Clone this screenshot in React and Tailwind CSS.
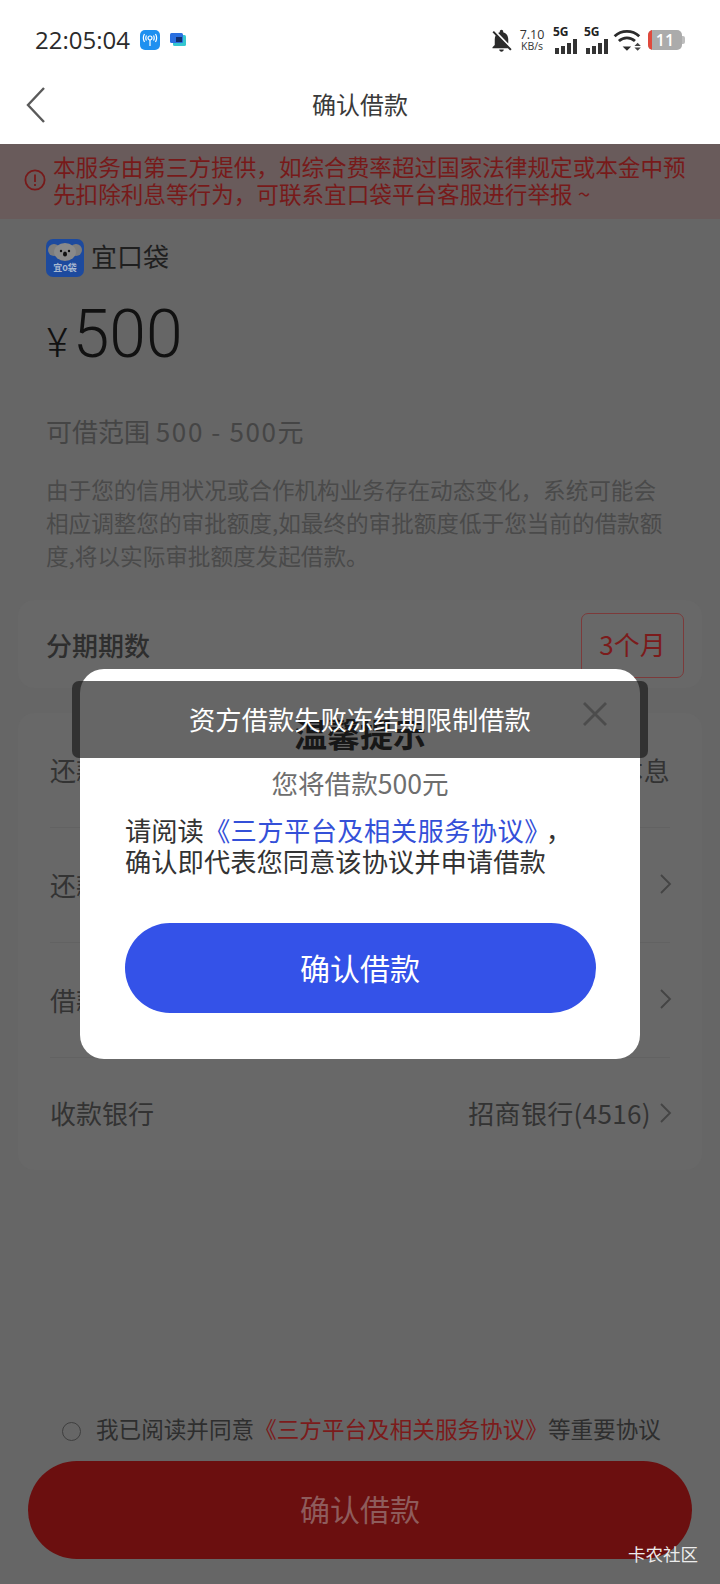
import React from "react"
import { MdNotificationsOff } from "react-icons/md"

const cjk = { fontFamily: '"Noto Sans CJK SC", sans-serif' }

function Signal() {
  return (
    <div className="flex flex-col items-start w-[25px]">
      <span className="text-[12px] leading-[12px] font-bold text-[#222] font-['Open_Sans',sans-serif]">5G</span>
      <svg width="25" height="15" viewBox="0 0 25 15" className="mt-[1px]">
        <rect x="2" y="9" width="4" height="6" fill="#333" />
        <rect x="8" y="7" width="4" height="8" fill="#333" />
        <rect x="14" y="4" width="4" height="11" fill="#333" />
        <rect x="20" y="0" width="4" height="15" fill="#333" />
      </svg>
    </div>
  )
}

function StatusBar() {
  return (
    <div className="h-[72px] bg-white flex items-center justify-between pl-[35px] pr-[35px] pt-[8px]">
      <div className="flex items-center">
        <span className="text-[24px] leading-none text-[#2b2b2b] font-['Open_Sans',sans-serif] font-medium w-[105px]">22:05:04</span>
        <div className="w-[20px] h-[20px] rounded-[5px] bg-[#1e90f0] flex items-center justify-center">
          <svg width="16" height="14" viewBox="0 0 16 14" fill="none" stroke="white" strokeWidth="1.2">
            <circle cx="8" cy="5" r="2" />
            <path d="M8 7v6M4.5 2.5a5 5 0 0 0 0 5M11.5 2.5a5 5 0 0 1 0 5M2.5 1a8 8 0 0 0 0 8M13.5 1a8 8 0 0 1 0 8" />
          </svg>
        </div>
        <svg width="16" height="15" viewBox="0 0 16 15" className="ml-[10px]">
          <rect x="3" y="2" width="13" height="11" rx="1.5" fill="#35c7d0" />
          <rect x="0" y="0" width="13" height="10" rx="1.5" fill="#2a6fe0" />
          <rect x="6" y="4" width="6" height="5" fill="#12306e" />
        </svg>
      </div>
      <div className="flex items-center">
        <MdNotificationsOff className="w-[27px] h-[27px] text-[#2b2b2b]" />
        <div className="ml-[4px] w-[26px] flex flex-col items-center font-['Open_Sans',sans-serif] text-[#333]">
          <span className="text-[12.5px] leading-[13px] font-medium">7.10</span>
          <span className="text-[10.5px] leading-[11px]">KB/s</span>
        </div>
        <div className="ml-[8px] flex gap-[6px]">
          <Signal />
          <Signal />
        </div>
        <svg width="30" height="24" viewBox="0 0 28 22" fill="none" className="ml-[4px]">
          <path d="M1.5 7.5a17 17 0 0 1 23 0" stroke="#2b2b2b" strokeWidth="2.6" />
          <path d="M5.5 12a11 11 0 0 1 15 0" stroke="#2b2b2b" strokeWidth="2.6" />
          <path d="M9 17h8l-4 4z" fill="#2b2b2b" />
          <path d="M20 16.5h6l-3-3zM20 18h6l-3 3z" fill="#444" />
        </svg>
        <div className="ml-[5px] w-[37px] h-[20px] flex items-center">
          <div className="relative w-[34px] h-[20px] rounded-[5px] bg-[#ababab] overflow-hidden flex items-center justify-center">
            <div className="absolute left-0 top-0 bottom-0 w-[4px] bg-[#e0493c]" />
            <span className="text-[16px] leading-none font-semibold text-white font-['Open_Sans',sans-serif]">11</span>
          </div>
          <div className="w-[3px] h-[8px] bg-[#bdbdbd] rounded-r-[2px]" />
        </div>
      </div>
    </div>
  )
}

function NavBar() {
  return (
    <div className="relative h-[72px] bg-white flex items-center justify-center pb-[8px]">
      <svg width="24" height="38" viewBox="0 0 24 38" fill="none" className="absolute left-[24px] top-[14px]">
        <path d="M20 2 L4 19 L20 36" stroke="#5a5a5a" strokeWidth="2.4" />
      </svg>
      <span className="text-[24px] text-[#3a3a3a]">确认借款</span>
    </div>
  )
}

function Chevron() {
  return (
    <svg width="14" height="22" viewBox="0 0 14 22" fill="none" className="ml-[8px] mr-[-3px]">
      <path d="M2 2 L11 11 L2 20" stroke="#444" strokeWidth="1.8" />
    </svg>
  )
}

function Row({ label, value, arrow, last }) {
  return (
    <div className={"h-[115px] flex items-center justify-between text-[26px] text-[#333] " + (last ? "pb-[6px]" : "pb-[2px] border-b border-[#626262]")}>
      <span>{label}</span>
      <div className="flex items-center">
        <span className="tracking-[0.35px]">{value}</span>
        {arrow && <Chevron />}
      </div>
    </div>
  )
}

function KoalaLogo() {
  return (
    <svg width="38" height="38" viewBox="0 0 38 38" className="shrink-0">
      <rect width="38" height="38" rx="7" fill="#1d4a9e" />
      <circle cx="8" cy="11" r="6" fill="#7d7d7d" />
      <circle cx="30" cy="11" r="6" fill="#7d7d7d" />
      <ellipse cx="19" cy="13" rx="11" ry="9" fill="#8a8a8a" />
      <circle cx="15" cy="12" r="1.2" fill="#111" />
      <circle cx="23" cy="12" r="1.2" fill="#111" />
      <ellipse cx="19" cy="15" rx="2" ry="2.5" fill="#111" />
      <text x="19" y="32" textAnchor="middle" fontSize="9" fontWeight="700" fill="#a8b8d0" fontFamily="Noto Sans CJK SC">宜o袋</text>
    </svg>
  )
}

function Modal() {
  return (
    <>
      <div className="absolute left-[80px] top-[669px] w-[560px] h-[390px] rounded-[24px] bg-white flex flex-col items-center overflow-hidden">
        <div className="mt-[41px] text-[33px] leading-[46px] font-bold text-[#1a1a1a]">温馨提示</div>
        <div className="mt-[8px] text-[26.6px] leading-[38px] text-[#6e6e6e]">您将借款500元</div>
        <div className="mt-[12px] w-[470px] text-[26.3px] leading-[31px] text-[#333]">
          请阅读<span className="text-[#3450d8] tracking-[0.4px]">《三方平台及相关服务协议》</span><span className="ml-[8px]">，</span><br />
          确认即代表您同意该协议并申请借款
        </div>
        <div className="mt-[47px] w-[471px] h-[90px] pb-[2px] rounded-full bg-[#3452e8] flex items-center justify-center text-[30px] text-white">确认借款</div>
      </div>
      <div className="absolute left-[72px] top-[681px] w-[576px] h-[77px] rounded-[7px] bg-[#171717]/[0.66] flex items-center justify-center">
        <span className="text-[26.3px] text-white relative top-[-1px]">资方借款失败冻结期限制借款</span>
        <svg width="26" height="26" viewBox="0 0 26 26" fill="none" className="absolute right-[40px] top-[20px]">
          <path d="M2 2 L24 24 M24 2 L2 24" stroke="#4c4c4c" strokeWidth="2.8" />
        </svg>
      </div>
    </>
  )
}

export default function App() {
  return (
    <div className="relative w-[720px] h-[1584px] bg-[#666] flex flex-col overflow-hidden" style={cjk}>
      <StatusBar />
      <NavBar />

      <div className="h-[75px] bg-[#695b5b] pl-[24px] pr-[20px] pb-[4px] flex items-center text-[#771a1a]">
        <svg width="22" height="22" viewBox="0 0 22 22" fill="none" className="shrink-0">
          <circle cx="11" cy="11" r="9.6" stroke="#771a1a" strokeWidth="1.8" />
          <path d="M11 5.5v7.5M11 15v2" stroke="#771a1a" strokeWidth="1.8" />
        </svg>
        <p className="ml-[7px] text-[22.6px] leading-[27px] whitespace-nowrap">
          本服务由第三方提供，如综合费率超过国家法律规定或本金中预<br />
          先扣除利息等行为，可联系宜口袋平台客服进行举报 ~
        </p>
      </div>

      <div className="px-[46px] pt-[19px]">
        <div className="flex items-center">
          <KoalaLogo />
          <span className="ml-[7px] text-[26px] text-[#1f1f1f] relative top-[-2px]">宜口袋</span>
        </div>
        <div className="mt-[20px] flex items-baseline h-[76px] text-[#111] font-['Roboto',sans-serif]">
          <span className="text-[40px] ml-[1px] font-light">¥</span>
          <span className="ml-[5px] text-[66px] leading-[76px] font-light">500</span>
        </div>
        <div className="mt-[39px] text-[26px] leading-[38px] text-[#454545]">可借范围 <span className="tracking-[1.6px]">500 - 500</span>元</div>
        <p className="mt-[23px] text-[22.6px] leading-[33px] text-[#4a4a4a] whitespace-nowrap">
          由于您的信用状况或合作机构业务存在动态变化，系统可能会<br />
          相应调整您的审批额度,如最终的审批额度低于您当前的借款额<br />
          度,将以实际审批额度发起借款。
        </p>
      </div>

      <div className="mx-[18px] mt-[28px] h-[88px] rounded-[16px] bg-[#686868] pl-[28px] pr-[18px] flex items-center justify-between">
        <span className="text-[26px] font-medium text-[#2e2e2e]">分期期数</span>
        <div className="w-[103px] h-[65px] pb-[3px] rounded-[7px] border border-[#7c3a3a] flex items-center justify-center text-[26px] text-[#7c1b1b] relative top-[1px]">3个月</div>
      </div>

      <div className="mx-[18px] mt-[25px] h-[457px] rounded-[16px] bg-[#686868] px-[32px]">
        <Row label="还款方式" value="等额本息" />
        <Row label="还款计划" arrow />
        <Row label="借款用途" arrow />
        <Row label="收款银行" value="招商银行(4516)" arrow last />
      </div>

      <div className="mt-auto">
        <div className="flex items-center pl-[62px] h-[30px]">
          <span className="w-[19px] h-[19px] rounded-full border border-[#3f3f3f] relative top-[2px]" />
          <span className="ml-[15px] text-[22.6px] text-[#2e2e2e] whitespace-nowrap">
            我已阅读并同意<span className="text-[#7c1b1b]">《三方平台及相关服务协议》</span>等重要协议
          </span>
        </div>
        <div className="mx-[28px] mt-[17px] mb-[25px] h-[98px] pb-[4px] rounded-full bg-[#6b0f0f] flex items-center justify-center text-[30px] text-[#8e5c5c]">确认借款</div>
      </div>

      <Modal />
      <div className="absolute right-[22px] top-[1542px] text-[17.5px] leading-[24px] text-[#ececec]">卡农社区</div>
    </div>
  )
}
